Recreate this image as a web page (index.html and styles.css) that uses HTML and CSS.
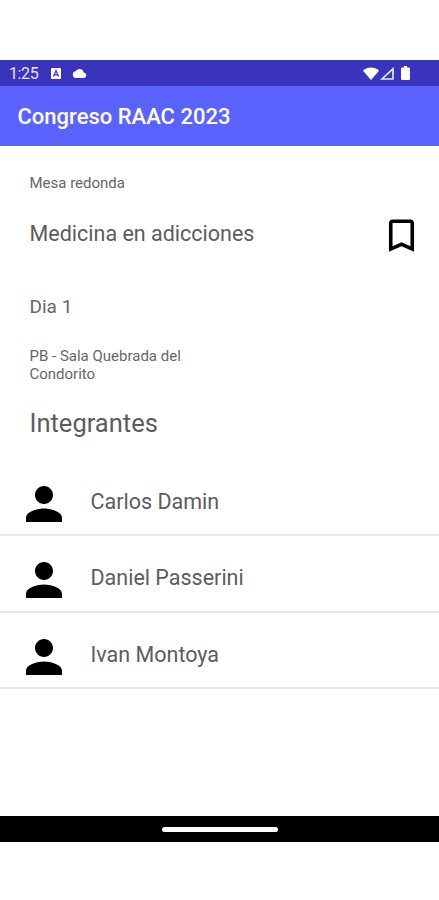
FILE: index.html
```html
<!DOCTYPE html>
<html lang="es">
<head>
<meta charset="utf-8">
<title>Congreso RAAC 2023</title>
<link rel="stylesheet" href="styles.css">
</head>
<body>
<div class="phone">
  <div class="status">
    <span class="time">1:25</span>
    <svg class="keyboard" viewBox="0 0 10 11"><rect width="10" height="11" rx="1" fill="#fff"/><path d="M2.5 8.5 5 2.5l2.5 6M3.5 6.8h3" fill="none" stroke="#3a34bd" stroke-width="1.2"/></svg>
    <svg class="cloud" viewBox="0 4 24 16"><path fill="#fff" d="M19.35 10.04A7.49 7.49 0 0 0 12 4C9.11 4 6.6 5.64 5.35 8.04A5.994 5.994 0 0 0 0 14c0 3.31 2.69 6 6 6h13c2.76 0 5-2.24 5-5 0-2.64-2.05-4.78-4.65-4.96z"/></svg>
    <span class="grow"></span>
    <svg class="wifi" viewBox="0 0 16 13"><path fill="#fff" d="M0 3.7C4.5-.7 11.500-.7 16 3.700L8 13z"/></svg>
    <svg class="signal" viewBox="0 0 14 13"><path fill="none" stroke="#e4e5ff" stroke-width="1.700" d="M2 12H13V1.800z"/></svg>
    <svg class="battery" viewBox="0 0 9 14"><path fill="#fff" d="M3 0h3v1.500h2q1 0 1 1V13q0 1-1 1H1q-1 0-1-1V2.500q0-1 1-1h2z"/></svg>
  </div>
  <header class="appbar"><h1>Congreso RAAC 2023</h1></header>
  <main>
    <section class="details">
      <p class="kind">Mesa redonda</p>
      <div class="heading">
        <h2>Medicina en adicciones</h2>
        <svg class="bookmark" viewBox="0 0 24 24"><path d="M17 3H7c-1.100 0-2 .9-2 2v16l7-3 7 3V5c0-1.100-.9-2-2-2zm0 15-5-2.180L7 18V5h10z"/></svg>
      </div>
      <p class="day">Dia 1</p>
      <p class="room">PB - Sala Quebrada del<br>Condorito</p>
      <h3>Integrantes</h3>
    </section>
    <ul class="members">
      <li><svg viewBox="0 0 24 24"><path d="M12 12c2.210 0 4-1.790 4-4s-1.790-4-4-4-4 1.790-4 4 1.790 4 4 4zm0 2c-2.670 0-8 1.340-8 4v2h16v-2c0-2.660-5.330-4-8-4z"/></svg><span>Carlos Damin</span></li>
      <li><svg viewBox="0 0 24 24"><path d="M12 12c2.210 0 4-1.790 4-4s-1.790-4-4-4-4 1.790-4 4 1.790 4 4 4zm0 2c-2.670 0-8 1.340-8 4v2h16v-2c0-2.660-5.330-4-8-4z"/></svg><span>Daniel Passerini</span></li>
      <li><svg viewBox="0 0 24 24"><path d="M12 12c2.210 0 4-1.790 4-4s-1.790-4-4-4-4 1.790-4 4 1.790 4 4 4zm0 2c-2.670 0-8 1.340-8 4v2h16v-2c0-2.660-5.330-4-8-4z"/></svg><span>Ivan Montoya</span></li>
    </ul>
  </main>
  <div class="navbar"><div class="handle"></div></div>
</div>
</body>
</html>
```
FILE: styles.css
```css
* { box-sizing: border-box; margin: 0; padding: 0; }
body { background: #fff; font-family: Roboto, "Liberation Sans", sans-serif; color: #666; }
svg { display: block; flex: none; }
.phone { height: 900px; padding: 60px 0 58px; display: flex; flex-direction: column; }
.status { height: 26px; flex: none; background: #3a34bd; display: flex; align-items: center; padding: 0 29px 0 9px; color: #e4e5ff; }
.time { font-size: 16px; line-height: 26px; width: 42px; padding-top: 1px; white-space: nowrap; letter-spacing: -0.4px; }
.keyboard { width: 10px; height: 11px; }
.cloud { width: 15px; height: 9px; margin-left: 11px; }
.grow { flex: 1; }
.wifi { width: 16px; height: 13px; }
.signal { width: 14px; height: 13px; margin-left: 1px; }
.battery { width: 9px; height: 14px; margin-left: 7px; }
.appbar { height: 60px; flex: none; background: #5b63ff; padding: 0 17.5px; color: #fff; }
.appbar h1 { font-size: 22px; font-weight: 500; line-height: 62px; white-space: nowrap; }
main { flex: 1; }
.details { padding: 28px 16px 0 29.5px; height: 314px; }
.kind { font-size: 15px; line-height: 18px; }
.heading { display: flex; justify-content: space-between; align-items: center; height: 43px; margin-top: 22px; }
.heading h2 { font-size: 21.5px; font-weight: 400; line-height: 26px; margin-top: -4px; color: #5c5c5c; }
.bookmark { width: 43px; height: 43px; fill: #000; }
.day { font-size: 19px; line-height: 24px; margin-top: 38px; }
.room { font-size: 15px; line-height: 18px; margin-top: 28px; }
.details h3 { font-size: 25.5px; font-weight: 400; line-height: 30px; margin-top: 25px; color: #5c5c5c; }
.members { list-style: none; }
.members li { height: 76.300px; border-bottom: 2px solid #e8e8e8; display: flex; align-items: flex-start; padding: 17px 0 0 17px; }
.members svg { width: 54px; height: 54px; }
.members span { font-size: 21.5px; line-height: 26px; margin: 12px 0 0 19.5px; color: #5c5c5c; }
.navbar { height: 26px; flex: none; background: #000; display: flex; justify-content: center; align-items: center; }
.handle { width: 116px; height: 5px; border-radius: 3px; background: #fff; }
```
